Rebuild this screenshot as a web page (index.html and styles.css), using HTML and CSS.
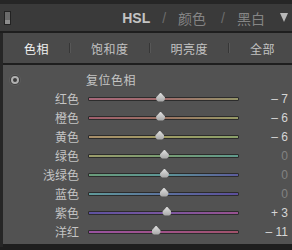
FILE: index.html
```html
<!DOCTYPE html>
<html lang="zh-CN">
<head>
    <meta charset="UTF-8">
    <title>HSL</title>
    <link rel="stylesheet" href="styles.css">
</head>
<body>
    <div class="topbar"></div>
    <header class="header">
        <span class="toggle"></span>
        <div class="title">
            <span class="title-on">HSL</span>
            <span class="slash">/</span>
            <span class="title-item">颜色</span>
            <span class="slash">/</span>
            <span>黑白</span>
            <span class="arrow"></span>
        </div>
    </header>
    <div class="content">
        <nav class="tabs">
            <span class="tab tab-on">色相</span>
            <span class="sep"></span>
            <span class="tab">饱和度</span>
            <span class="sep"></span>
            <span class="tab">明亮度</span>
            <span class="sep"></span>
            <span class="tab">全部</span>
        </nav>
        <section class="panel">
            <div class="reset">
                <span class="reset-icon"></span>
                <span class="reset-label">复位色相</span>
            </div>
            <div class="row">
                <span class="label">红色</span>
                <div class="track red"><span class="thumb" style="left: 47.7%"></span></div>
                <span class="value">– 7</span>
            </div>
            <div class="row">
                <span class="label">橙色</span>
                <div class="track orange"><span class="thumb" style="left: 47.7%"></span></div>
                <span class="value">– 6</span>
            </div>
            <div class="row">
                <span class="label">黄色</span>
                <div class="track yellow"><span class="thumb" style="left: 47.2%"></span></div>
                <span class="value">– 6</span>
            </div>
            <div class="row">
                <span class="label">绿色</span>
                <div class="track green"><span class="thumb" style="left: 50.3%"></span></div>
                <span class="value zero">0</span>
            </div>
            <div class="row">
                <span class="label">浅绿色</span>
                <div class="track aqua"><span class="thumb" style="left: 50.3%"></span></div>
                <span class="value zero">0</span>
            </div>
            <div class="row">
                <span class="label">蓝色</span>
                <div class="track blue"><span class="thumb" style="left: 50%"></span></div>
                <span class="value zero">0</span>
            </div>
            <div class="row">
                <span class="label">紫色</span>
                <div class="track purple"><span class="thumb" style="left: 52%"></span></div>
                <span class="value">+ 3</span>
            </div>
            <div class="row">
                <span class="label">洋红</span>
                <div class="track magenta"><span class="thumb" style="left: 44.7%"></span></div>
                <span class="value">– 11</span>
            </div>
        </section>
    </div>
</body>
</html>
```

FILE: styles.css
```css
body {
    margin: 0;
    width: 292px;
    height: 250px;
    overflow: hidden;
    background-color: #1e1e1e;
    font-family: "Noto Sans CJK SC", "Liberation Sans", sans-serif;
}
.topbar {
    height: 4px;
    background-color: #262626;
}
.header {
    height: 27px;
    background-color: #3a3a3a;
    display: flex;
    align-items: center;
    justify-content: space-between;
    padding: 0 4px;
    border-bottom: 2px solid #1e1e1e;
}
.toggle {
    width: 5px;
    height: 12px;
    background-color: #6a6a6a;
    border: 1px solid #222;
    box-shadow: inset 0 -4px 0 #8c8c8c;
}
.title {
    display: flex;
    align-items: center;
    gap: 12px;
    font-size: 14px;
    color: #858585;
}
.title-on {
    font-family: "Liberation Sans", sans-serif;
    font-weight: bold;
    color: #c4c4c4;
}
.title-item {
    margin-right: 3px;
}
.slash {
    font-family: "Liberation Sans", sans-serif;
    color: #6c6c6c;
}
.arrow {
    width: 0;
    height: 0;
    margin-left: 3px;
    border-left: 4px solid transparent;
    border-right: 4px solid transparent;
    border-top: 9px solid #b8b8b8;
}
.content {
    border-left: 3px solid #262626;
}
.tabs {
    height: 30px;
    background-color: #4a4a4a;
    display: flex;
    align-items: center;
    gap: 20px;
    padding-left: 21px;
    border-bottom: 2px solid #1e1e1e;
    font-size: 12px;
    letter-spacing: 0.5px;
    color: #c2c2c2;
}
.tab-on {
    color: #f2f2f2;
}
.sep {
    width: 1px;
    height: 10px;
    background-color: #363636;
    border-right: 1px solid #575757;
}
.panel {
    height: 182px;
    box-sizing: border-box;
    padding-top: 5px;
    background-color: #525252;
    border-bottom: 3px solid #1e1e1e;
}
.reset {
    height: 19px;
    display: flex;
    align-items: center;
    padding-left: 8px;
    font-size: 12px;
    color: #c4c4c4;
}
.reset-icon {
    width: 4px;
    height: 4px;
    border-radius: 50%;
    background-color: #3c3c3c;
    border: 2px solid #b0b0b0;
    box-shadow: 0 0 0 1px #3e3e3e, 0 0 0 2px #5c5c5c;
}
.reset-label {
    margin-left: 67px;
    letter-spacing: 0.5px;
}
.row {
    height: 19px;
    display: grid;
    grid-template-columns: 76px 151px 40px;
    column-gap: 9px;
    align-items: center;
    font-size: 12px;
}
.label {
    text-align: right;
    color: #c4c4c4;
}
.track {
    position: relative;
    height: 2px;
    border: 1px solid #2c2c2c;
    border-radius: 1px;
}
.thumb {
    position: absolute;
    top: -5px;
    width: 9px;
    height: 9px;
    margin-left: -4px;
    background: linear-gradient(#e0e0e0, #a4a4a4);
    clip-path: polygon(50% 0, 100% 55%, 95% 85%, 75% 100%, 25% 100%, 5% 85%, 0 55%);
}
.value {
    text-align: right;
    font-family: "Liberation Sans", sans-serif;
    font-size: 12px;
    color: #d6d6d6;
}
.zero {
    color: #828282;
}
.red { background: linear-gradient(to right, #a8687a, #a06c6c, #949468); }
.orange { background: linear-gradient(to right, #a05e6c, #9a7262, #969a66); }
.yellow { background: linear-gradient(to right, #a88e6a, #a09c64, #8aa06a); }
.green { background: linear-gradient(to right, #9c9c6a, #789c72, #609a8c); }
.aqua { background: linear-gradient(to right, #6a9c7a, #5c9696, #5c5c9c); }
.blue { background: linear-gradient(to right, #609a9a, #5c729e, #5c4e9c); }
.purple { background: linear-gradient(to right, #5e52a0, #7a56a0, #985290); }
.magenta { background: linear-gradient(to right, #9852a0, #a05288, #a0526a); }
```
